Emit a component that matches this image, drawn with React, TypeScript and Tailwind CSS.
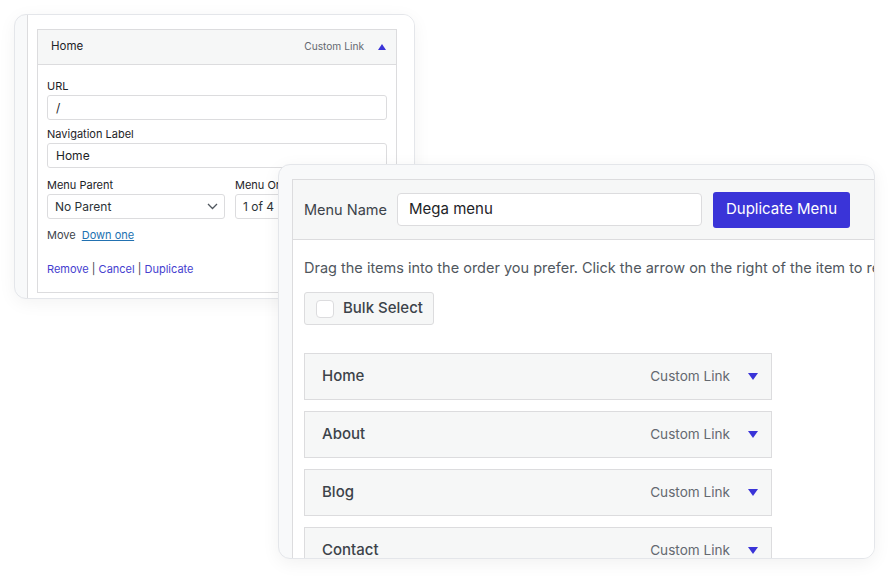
import React from "react";

const font = { fontFamily: "Inter, 'Noto Sans', sans-serif" };

function TriUp() {
  return (
    <svg width="8" height="6" viewBox="0 0 8 6">
      <path d="M4 0 L8 6 L0 6 Z" fill="#3a34d8" />
    </svg>
  );
}
function TriDown() {
  return (
    <svg width="10" height="7" viewBox="0 0 10 7">
      <path d="M0 0 L10 0 L5 7 Z" fill="#3a34d8" />
    </svg>
  );
}

function Item({ label }: { label: string }) {
  return (
    <div className="h-[47px] w-[468px] bg-[#f6f7f7] border border-[#dcdcde] flex items-center pl-[17px] pr-[13px]">
      <span className="text-[15px] font-medium text-[#3c434a]">{label}</span>
      <span className="ml-auto text-[13.6px] text-[#646970] mr-[18px]">Custom Link</span>
      <TriDown />
    </div>
  );
}

export default function App() {
  return (
    <div className="relative w-[888px] h-[578px] bg-white overflow-hidden" style={font}>
      {/* Left card */}
      <div className="absolute left-[14px] top-[14px] w-[401px] h-[285px] rounded-[12px] border border-[#e4e6ea] bg-[#f8f9fa] overflow-hidden shadow-[0_4px_18px_rgba(0,0,0,0.05)] pl-[12px]">
        <div className="h-full bg-white border-l border-[#dcdcde] pl-[9px] pt-[14px]">
          <div className="w-[360px]">
            <div className="h-[36px] bg-[#f6f7f7] border border-[#dcdcde] flex items-center pl-[13px] pr-[10px]">
              <span className="text-[11.5px] text-[#1d2327]">Home</span>
              <span className="ml-auto text-[10.2px] text-[#646970] mr-[14px]">Custom Link</span>
              <TriUp />
            </div>
            <div className="h-[228px] border-x border-b border-[#dcdcde] px-[9px] pt-[14px] text-[11px] text-[#1d2327]">
              <div className="leading-[14px]">URL</div>
              <div className="mt-[2px] h-[25px] border border-[#dcdcde] rounded-[3px] flex items-center pl-[8px] text-[12px]">/</div>
              <div className="mt-[7px] leading-[14px]">Navigation Label</div>
              <div className="mt-[2px] h-[25px] border border-[#dcdcde] rounded-[3px] flex items-center pl-[8px] text-[12px]">Home</div>
              <div className="mt-[10px] flex gap-[10px]">
                <div className="w-[178px]">
                  <div className="leading-[14px]">Menu Parent</div>
                  <div className="mt-[2px] h-[25px] border border-[#dcdcde] rounded-[3px] flex items-center pl-[7px] pr-[6px] text-[12px] text-[#2c3338]">
                    <span>No Parent</span>
                    <svg className="ml-auto" width="11" height="7" viewBox="0 0 11 7">
                      <path d="M1 1 L5.5 5.5 L10 1" fill="none" stroke="#50575e" strokeWidth="1.3" />
                    </svg>
                  </div>
                </div>
                <div className="w-[120px]">
                  <div className="leading-[14px]">Menu Order</div>
                  <div className="mt-[2px] h-[25px] border border-[#dcdcde] rounded-[3px] flex items-center pl-[7px] text-[12px] text-[#2c3338]">1 of 4</div>
                </div>
              </div>
              <div className="mt-[9px] leading-[14px] flex gap-[6px] text-[#3c434a]">
                <span>Move</span>
                <span className="text-[#2271b1] underline">Down one</span>
              </div>
              <div className="mt-[20px] leading-[14px] text-[#3c434a]">
                <span className="text-[#4540cf]">Remove</span> | <span className="text-[#4540cf]">Cancel</span> | <span className="text-[#4540cf]">Duplicate</span>
              </div>
            </div>
          </div>
        </div>
      </div>

      {/* Right card */}
      <div className="absolute left-[278px] top-[164px] w-[597px] h-[395px] rounded-[12px] border border-[#e4e6ea] bg-[#f8f9fa] overflow-hidden shadow-[0_4px_18px_rgba(0,0,0,0.06)] pl-[13px] pt-[14px]">
        <div className="h-full bg-white border-l border-t border-[#dcdcde]">
          <div className="h-[60px] bg-[#f6f7f7] border-b border-[#dcdcde] flex items-center pl-[11px]">
            <span className="text-[14.5px] text-[#3c434a] w-[93px]">Menu Name</span>
            <div className="w-[305px] h-[33px] bg-white border border-[#dcdcde] rounded-[4px] flex items-center pl-[11px] text-[15px] text-[#1d2327]">Mega menu</div>
            <div className="ml-[11px] w-[137px] h-[36px] bg-[#3a34d8] rounded-[3px] flex items-center justify-center text-[15px] text-white">Duplicate Menu</div>
          </div>
          <div className="pl-[11px] pt-[18px]">
            <div className="text-[14.5px] leading-[20px] text-[#50575e] whitespace-nowrap">
              Drag the items into the order you prefer. Click the arrow on the right of the item to reveal additional configuration options.
            </div>
            <div className="mt-[14px] w-[130px] h-[33px] bg-[#f6f7f7] border border-[#dcdcde] rounded-[3px] flex items-center pl-[11px]">
              <div className="w-[18px] h-[18px] bg-white border border-[#dcdcde] rounded-[4px]" />
              <span className="ml-[9px] text-[15px] font-medium text-[#3c434a]">Bulk Select</span>
            </div>
            <div className="mt-[28px] flex flex-col gap-[11px]">
              <Item label="Home" />
              <Item label="About" />
              <Item label="Blog" />
              <Item label="Contact" />
            </div>
          </div>
        </div>
      </div>
    </div>
  );
}
